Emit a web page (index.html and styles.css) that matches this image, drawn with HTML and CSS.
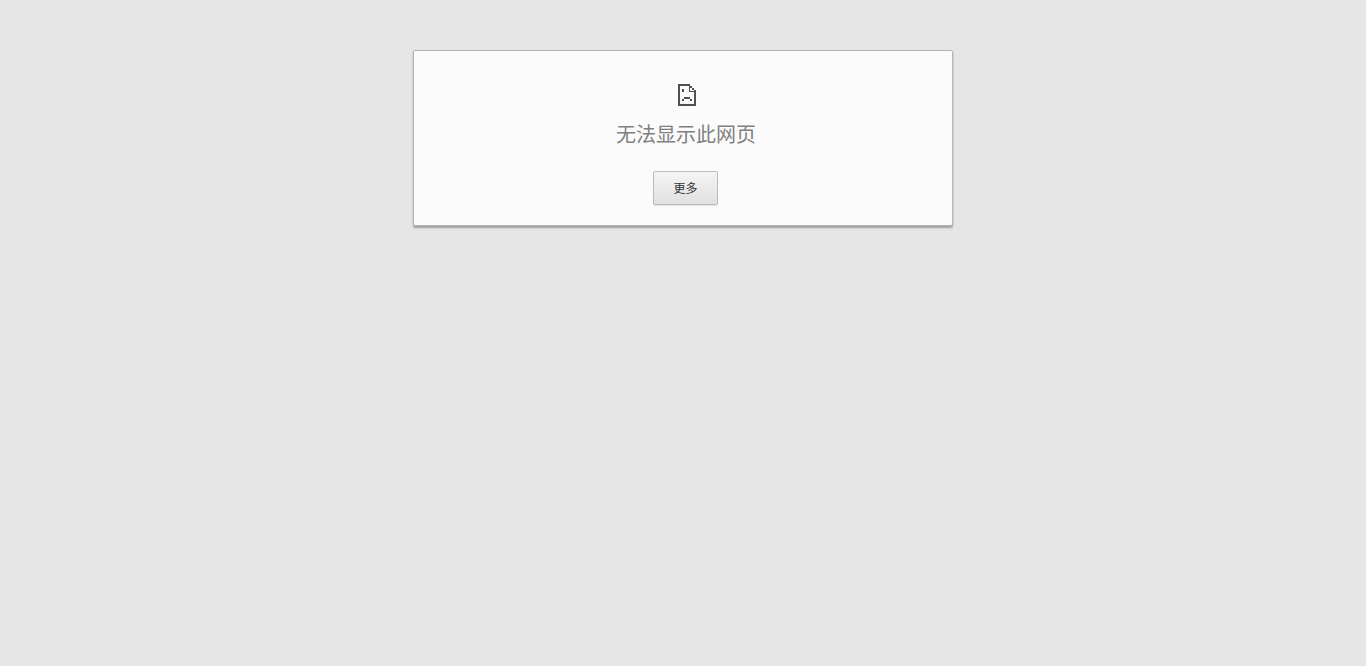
FILE: index.html
```html
<!DOCTYPE html>
<html lang="zh-CN">
<head>
    <meta charset="UTF-8">
    <title>无法显示此网页</title>
    <link rel="stylesheet" href="styles.css">
</head>
<body>

    <!-- Error Box -->
    <div class="error-box">
        <svg class="error-icon" width="18" height="22" viewBox="0 0 18 22" shape-rendering="crispEdges">
            <path fill="#505050" d="M0 0h11v2H2v18h14V8h2v14H0zM11 0h1v2h-1zM12 2h2v2h-2zM14 4h2v2h-2zM16 6h2v2h-2zM11 2h1v5h6v1h-7zM4 5h2v3H4zM4 15h2v2H4zM6 13h6v2H6zM12 15h2v2h-2z"/>
        </svg>
        <h1 class="error-title">无法显示此网页</h1>
        <button class="more-btn">更多</button>
    </div>

</body>
</html>
```

FILE: styles.css
```css
/* General Styles */
* {
    margin: 0;
    padding: 0;
    box-sizing: border-box;
}
html, body {
    height: 100%;
}
body {
    background-color: #e6e6e6;
    font-family: "Liberation Sans", "Noto Sans CJK SC", sans-serif;
    padding-top: 50px;
    overflow: hidden;
}

/* Error Box */
.error-box {
    display: flex;
    flex-direction: column;
    align-items: center;
    width: 540px;
    height: 176px;
    margin-left: 413px;
    padding-top: 33px;
    padding-left: 6px;
    background-color: #fbfbfb;
    border: 1px solid #b4b4b4;
    border-radius: 2px;
    box-shadow: 0 2px 2px rgba(0, 0, 0, 0.3);
}
.error-icon {
    display: block;
    margin-left: 1px;
}
.error-title {
    margin-top: 17px;
    font-size: 20px;
    line-height: 24px;
    font-weight: normal;
    color: #808080;
}

/* Button */
.more-btn {
    width: 65px;
    height: 34px;
    margin-top: 24px;
    margin-right: 1px;
    padding-bottom: 1px;
    font-family: inherit;
    font-size: 12px;
    color: #333;
    background: linear-gradient(#f4f4f4, #e0e0e0);
    border: 1px solid #bcbcbc;
    border-radius: 2px;
    box-shadow: 0 1px 1px rgba(0, 0, 0, 0.1);
    cursor: pointer;
}
```
